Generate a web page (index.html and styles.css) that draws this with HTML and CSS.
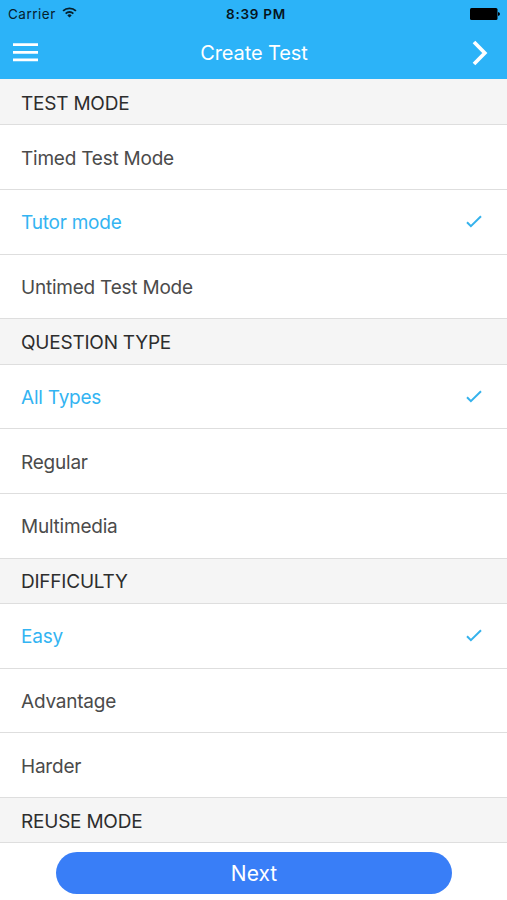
FILE: index.html
```html
<!DOCTYPE html>
<html lang="en">
<head>
<meta charset="utf-8">
<title>Create Test</title>
<link rel="stylesheet" href="styles.css">
</head>
<body>
<header class="top">
  <div class="status">
    <div class="carrier"><span class="carrier-name">Carrier</span>
      <svg class="wifi" width="15" height="11" viewBox="0 0 16 12"><g fill="none" stroke="#06202c" stroke-width="2"><path d="M1 4.3a10 10 0 0 1 14 0"/><path d="M3.8 7.2a6 6 0 0 1 8.400 0"/></g><path d="M8 11.500 5.600 9.200a3.400 3.400 0 0 1 4.800 0z" fill="#06202c"/></svg>
    </div>
    <span class="time">8:39 PM</span>
    <svg class="battery" width="30" height="12" viewBox="0 0 30 12"><rect x="0" y="0" width="27.500" height="12" rx="1.500"/><path d="M28 4q2 .3 2 2t-2 2z"/></svg>
  </div>
  <nav class="nav">
    <svg class="menu" width="25" height="19" viewBox="0 0 25 19"><path d="M0 1.700h25M0 9.300h25M0 16.900h25" stroke="#fff" stroke-width="2.700"/></svg>
    <h1 class="title">Create Test</h1>
    <svg class="chevron" width="16" height="26" viewBox="0 0 16 26"><path d="M2 2l10.800 11L2 24" fill="none" stroke="#fff" stroke-width="3.700"/></svg>
  </nav>
</header>
<main>
  <section>
    <h2 class="head first">TEST MODE</h2>
    <div class="row"><span>Timed Test Mode</span></div>
    <div class="row on"><span>Tutor mode</span><svg class="check" width="16" height="13" viewBox="0 0 16 13"><path d="M1 7.300l3.900 3.900L15 1.200"/></svg></div>
    <div class="row"><span>Untimed Test Mode</span></div>
  </section>
  <section>
    <h2 class="head">QUESTION TYPE</h2>
    <div class="row on"><span>All Types</span><svg class="check" width="16" height="13" viewBox="0 0 16 13"><path d="M1 7.300l3.900 3.900L15 1.200"/></svg></div>
    <div class="row"><span>Regular</span></div>
    <div class="row"><span>Multimedia</span></div>
  </section>
  <section>
    <h2 class="head">DIFFICULTY</h2>
    <div class="row on"><span>Easy</span><svg class="check" width="16" height="13" viewBox="0 0 16 13"><path d="M1 7.300l3.900 3.900L15 1.200"/></svg></div>
    <div class="row"><span>Advantage</span></div>
    <div class="row"><span>Harder</span></div>
  </section>
  <section>
    <h2 class="head">REUSE MODE</h2>
  </section>
</main>
<footer class="foot"><button class="next">Next</button></footer>
</body>
</html>
```
FILE: styles.css
```css
* { box-sizing: border-box; }
html, body { height: 100%; }
body {
  margin: 0;
  display: flex;
  flex-direction: column;
  overflow: hidden;
  background: #fff;
  font-family: Inter, "Liberation Sans", sans-serif;
  color: #4b4b4b;
}
.top {
  height: 79px;
  flex: none;
  background: #2cb3f8;
}
.status {
  height: 27px;
  padding: 0 7px 0 8px;
  display: grid;
  grid-template-columns: 1fr auto 1fr;
  align-items: center;
  color: #06202c;
  font-size: 13.5px;
}
.carrier { display: flex; align-items: center; gap: 6px; letter-spacing: 0.5px; }
.wifi { margin-top: -2px; }
.time {
  margin-left: 4px;
  color: #06151d;
  font-weight: 600;
  font-size: 13.5px;
  letter-spacing: 0.75px;
}
.battery { justify-self: end; fill: #000; }
.nav {
  height: 51px;
  padding: 0 19px 0 13px;
  display: grid;
  grid-template-columns: 1fr auto 1fr;
  align-items: center;
}
.title {
  margin: 0 0 0 7px;
  color: #fff;
  font-weight: 400;
  font-size: 20px;
  letter-spacing: -0.1px;
}
.chevron { justify-self: end; }
.head {
  margin: 0;
  height: 45.3px;
  padding: 2px 21px 0;
  display: flex;
  align-items: center;
  background: #f5f5f5;
  border-bottom: 1px solid #dedede;
  color: #2d2d2d;
  font-weight: 400;
  font-size: 19px;
  letter-spacing: -0.22px;
}
.first { height: 46.4px; padding-top: 3px; }
.row {
  height: 64.7px;
  padding: 2px 25px 0 21px;
  display: flex;
  align-items: center;
  justify-content: space-between;
  border-bottom: 1px solid #dedede;
  font-size: 19px;
  letter-spacing: -0.22px;
}
.on { color: #33b4f2; }
.check { margin-top: -2px; fill: none; stroke: #35b2ec; stroke-width: 2; }
.foot {
  flex: 1;
  padding: 8.4px 55px 6px 56px;
  display: flex;
}
.next {
  flex: 1;
  height: 42px;
  border: 0;
  border-radius: 21px;
  background: #397ef7;
  color: #fff;
  font: 400 21px Inter, "Liberation Sans", sans-serif;
  padding-top: 2px;
}
```
